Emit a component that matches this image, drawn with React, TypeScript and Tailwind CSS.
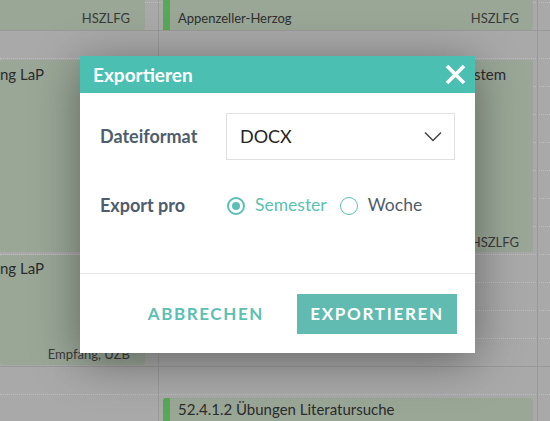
import React from "react";

const ROWS = Array.from({ length: 15 }, (_, i) => i);

function Card({
  className = "",
  stripe = false,
  children,
}: {
  className?: string;
  stripe?: boolean;
  children?: React.ReactNode;
}) {
  return (
    <div className={`flex shrink-0 overflow-hidden bg-[#9aa797] ${className}`}>
      {stripe ? <div className="w-[7px] shrink-0 bg-[#56a956]" /> : null}
      <div className="relative flex min-w-0 flex-1 flex-col">{children}</div>
    </div>
  );
}

function Radio({ checked }: { checked: boolean }) {
  return (
    <span
      className={`flex h-[18px] w-[18px] items-center justify-center rounded-full border-[#5cbfb3] ${
        checked ? "border-2" : "border-[1.5px]"
      }`}
    >
      {checked ? <span className="h-[8px] w-[8px] rounded-full bg-[#5cbfb3]" /> : null}
    </span>
  );
}

export default function App() {
  return (
    <div className="relative h-[421px] w-[550px] overflow-hidden bg-[#a9a9a9] font-['Lato','Noto_Sans',sans-serif]">
      {/* time grid lines */}
      <div className="-mt-[25px] flex flex-col">
        {ROWS.map((i) => (
          <div
            key={i}
            className={`h-[28px] border-b ${
              i === 1 || i === 13
                ? "border-solid border-[#999999]"
                : "border-dotted border-[#bdbdbd]"
            }`}
          />
        ))}
      </div>

      {/* columns with events */}
      <div className="absolute inset-0 flex">
        <div className="flex w-[159px] shrink-0 flex-col border-r border-[#9a9a9a] pr-[13px]">
          <Card className="h-[30px] rounded-br-[3px]">
            <div className="flex h-full items-end justify-end pb-[4px] pr-[15px] text-[13px] leading-[16px] text-[#3a3a3a]">
              HSZLFG
            </div>
          </Card>
          <Card className="mt-[30px] h-[192px] rounded-[3px]">
            <div className="flex w-[44px] justify-end whitespace-nowrap pt-[5px] text-[15px] leading-[18px] text-[#2b2b2b]">
              Einführung LaP
            </div>
          </Card>
          <Card className="mt-[3px] h-[110px] rounded-[3px]">
            <div className="flex w-[44px] justify-end whitespace-nowrap pt-[4px] text-[15px] leading-[18px] text-[#2b2b2b]">
              Einführung LaP
            </div>
            <div className="mt-auto flex justify-end pb-[3px] pr-[15px] text-[13px] leading-[16px] text-[#3a3a3a]">
              Empfang, UZB
            </div>
          </Card>
        </div>

        <div className="flex w-[379px] shrink-0 flex-col border-r border-[#9a9a9a] px-[4px]">
          <Card stripe className="h-[30px] rounded-br-[3px]">
            <div className="flex h-full items-end justify-between pb-[4px] pl-[8px] pr-[14px] text-[13px] leading-[16px] text-[#2f2f2f]">
              <span>Appenzeller-Herzog</span>
              <span className="text-[#3a3a3a]">HSZLFG</span>
            </div>
          </Card>
          <Card stripe className="mt-[30px] h-[192px] rounded-[3px]">
            <div className="flex w-[336px] justify-end whitespace-nowrap pt-[5px] text-[15px] leading-[18px] text-[#2b2b2b]">
              Bibliothekssystem
            </div>
            <div className="mt-auto flex justify-end pb-[2px] pr-[14px] text-[13px] leading-[16px] text-[#3a3a3a]">
              HSZLFG
            </div>
          </Card>
          <Card stripe className="mt-[146px] h-[40px] rounded-t-[3px]">
            <div className="whitespace-nowrap pl-[8px] pt-[2px] text-[15px] leading-[18px] text-[#2b2b2b]">
              52.4.1.2 Übungen Literatursuche
            </div>
          </Card>
        </div>

        <div className="flex-1" />
      </div>

      {/* dialog */}
      <div className="absolute left-[80px] top-[56px] w-[395px] bg-white shadow-[0_8px_44px_rgba(0,0,0,0.4)]">
        <div className="flex h-[37px] items-center justify-between bg-[#4bbfb2] pl-[13px] pr-[9px]">
          <span className="text-[19px] font-bold leading-none text-white">Exportieren</span>
          <svg width="21" height="21" viewBox="0 0 21 21">
            <path d="M2 2 L19 19 M19 2 L2 19" stroke="white" strokeWidth="3.6" />
          </svg>
        </div>

        <div className="px-[20px] pb-[54px] pt-[20px]">
          <div className="flex items-center">
            <span className="w-[126px] text-[18px] font-bold text-[#4e5d6c]">Dateiformat</span>
            <div className="flex h-[47px] flex-1 items-center justify-between border border-[#e0e0e0] pl-[13px] pr-[12px]">
              <span className="text-[18px] text-[#252525]">DOCX</span>
              <svg width="18" height="11" viewBox="0 0 18 11">
                <path d="M1 1.5 L9 9.5 L17 1.5" fill="none" stroke="#444" strokeWidth="1.5" />
              </svg>
            </div>
          </div>

          <div className="mt-[32px] flex items-center">
            <span className="w-[127px] text-[18px] font-bold text-[#4e5d6c]">Export pro</span>
            <Radio checked />
            <span className="ml-[10px] text-[17.5px] text-[#5cbfb3]">Semester</span>
            <span className="ml-[13px]">
              <Radio checked={false} />
            </span>
            <span className="ml-[10px] text-[17.5px] text-[#4e5d6c]">Woche</span>
          </div>
        </div>

        <div className="flex h-[80px] items-center justify-end gap-[33px] border-t border-[#e6e6e6] pr-[18px]">
          <span className="text-[17px] font-bold tracking-[1.6px] text-[#5cbfb3]">ABBRECHEN</span>
          <button className="flex h-[40px] w-[160px] items-center justify-center bg-[#62bbb0] text-[17px] font-bold tracking-[1.7px] text-white">
            EXPORTIEREN
          </button>
        </div>
      </div>
    </div>
  );
}
